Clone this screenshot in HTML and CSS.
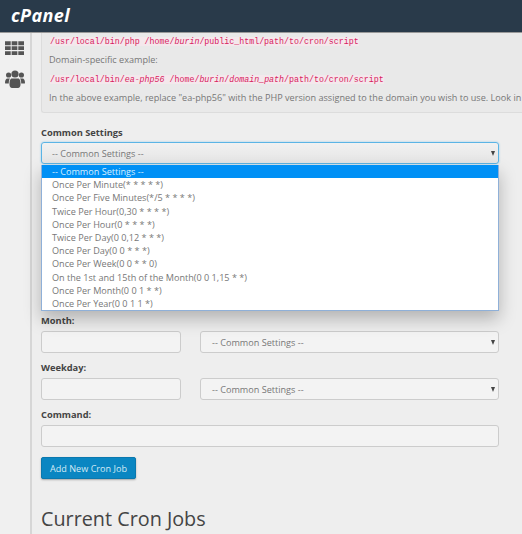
FILE: index.html
```html
<!DOCTYPE html>
<html lang="en">
<head>
    <meta charset="UTF-8">
    <meta name="viewport" content="width=device-width, initial-scale=1.0">
    <title>Cron Jobs - cPanel</title>
    <link rel="stylesheet" href="styles.css">
</head>
<body>
    <header class="topbar">
        <span class="logo">cPanel</span>
    </header>
    <div class="layout">
        <nav class="sidebar">
            <svg class="nav-icon" width="19" height="16" viewBox="0 0 20 16">
                <path fill="#555" d="M0 1h6v4H0zM7 1h6v4H7zM14 1h6v4h-6zM0 6.2h6v4H0zM7 6.2h6v4H7zM14 6.2h6v4h-6zM0 11.4h6v4H0zM7 11.4h6v4H7zM14 11.4h6v4h-6z"/>
            </svg>
            <svg class="nav-icon" width="20" height="19" viewBox="0 0 20 19">
                <g fill="#555">
                    <circle cx="3.6" cy="5" r="2.6"/>
                    <circle cx="16.4" cy="5" r="2.6"/>
                    <circle cx="10" cy="4" r="3.6"/>
                    <path d="M0 13c0-3 1-4.500 2.500-4.500h2.500c-.8 1-1.200 2.500-1.200 5H1c-.6 0-1-.1-1-.5zM20 13c0-3-1-4.500-2.500-4.500H15c.8 1 1.200 2.500 1.200 5H19c.6 0 1-.1 1-.5z"/>
                    <path d="M7 8.500h6c2 0 2.500 2.500 2.500 6 0 2-1 3.500-2.500 3.500H7c-1.500 0-2.500-1.500-2.500-3.500 0-3.500.5-6 2.500-6z"/>
                </g>
            </svg>
        </nav>
        <main class="content">
            <div class="well">
                <p class="code-line"><code>/usr/local/bin/php /home/<i>burin</i>/public_html/path/to/cron/script</code></p>
                <p class="note">Domain-specific example:</p>
                <p class="code-line"><code>/usr/local/bin/<i>ea-php56</i> /home/<i>burin</i>/<i>domain_path</i>/path/to/cron/script</code></p>
                <p class="note">In the above example, replace "ea-php56" with the PHP version assigned to the domain you wish to use. Look in</p>
            </div>

            <form class="cron-form">
                <div class="group common">
                    <label class="field-label">Common Settings</label>
                    <div class="select select-open"><span>-- Common Settings --</span></div>
                    <ul class="dropdown">
                        <li class="active">-- Common Settings --</li>
                        <li>Once Per Minute(* * * * *)</li>
                        <li>Once Per Five Minutes(*/5 * * * *)</li>
                        <li>Twice Per Hour(0,30 * * * *)</li>
                        <li>Once Per Hour(0 * * * *)</li>
                        <li>Twice Per Day(0 0,12 * * *)</li>
                        <li>Once Per Day(0 0 * * *)</li>
                        <li>Once Per Week(0 0 * * 0)</li>
                        <li>On the 1st and 15th of the Month(0 0 1,15 * *)</li>
                        <li>Once Per Month(0 0 1 * *)</li>
                        <li>Once Per Year(0 0 1 1 *)</li>
                    </ul>
                </div>

                <div class="group month">
                    <label class="field-label">Month:</label>
                    <div class="field-row">
                        <input class="text-input" type="text">
                        <div class="select"><span>-- Common Settings --</span></div>
                    </div>
                </div>

                <div class="group month">
                    <label class="field-label">Weekday:</label>
                    <div class="field-row">
                        <input class="text-input" type="text">
                        <div class="select"><span>-- Common Settings --</span></div>
                    </div>
                </div>

                <div class="group">
                    <label class="field-label">Command:</label>
                    <input class="text-input wide" type="text">
                </div>

                <button class="button" type="button">Add New Cron Job</button>
            </form>

            <h2 class="section-title">Current Cron Jobs</h2>
        </main>
    </div>
</body>
</html>
```

FILE: styles.css
```css
html, body {
    height: 100%;
}
body {
    margin: 0;
    font-family: "Open Sans", sans-serif;
    font-size: 9.1px;
    color: #777;
    background: #eee;
    overflow: hidden;
}
.topbar {
    height: 33px;
    box-sizing: border-box;
    padding: 3px 0 0 11px;
    background: #293a4a;
    border-bottom: 1px solid #999;
}
.logo {
    font-size: 18px;
    line-height: 24px;
    font-weight: 700;
    font-style: italic;
    letter-spacing: 0.4px;
    color: #fff;
}
.layout {
    display: flex;
    height: calc(100% - 33px);
}
.sidebar {
    width: 32px;
    box-sizing: border-box;
    padding: 7px 0 0 5px;
    display: flex;
    flex-direction: column;
    gap: 14px;
    background: #f0f0f0;
    border-right: 2px solid #d6d6d6;
}
.nav-icon {
    display: block;
}
.content {
    flex: 1;
    min-width: 0;
    padding-left: 9px;
}
.well {
    height: 80px;
    box-sizing: border-box;
    padding-top: 1px;
    padding-left: 7px;
    background: #e9e9e9;
    border: 1px solid #dcdcdc;
    border-top: none;
    border-right: none;
    border-radius: 0 0 0 3px;
    white-space: nowrap;
    overflow: hidden;
}
.well p {
    margin: 0;
}
.code-line {
    line-height: 13px;
    height: 13px;
    margin-top: 2px;
    padding-left: 1px;
}
.code-line code {
    font-family: "Liberation Mono", monospace;
    font-size: 8.3px;
    color: #d81b60;
    background: #f4e8ec;
}
.note {
    line-height: 13px;
}
.well .note {
    margin: 6px 0;
}
.cron-form {
    width: 458px;
    margin-top: 13px;
}
.group {
    margin-bottom: 10px;
}
.common {
    position: relative;
    margin-bottom: 150px;
}
.month {
    margin-bottom: 8px;
}
.field-label {
    display: block;
    height: 14px;
    margin-bottom: 3px;
    font-size: 9.3px;
    font-weight: 700;
    line-height: 14px;
    color: #444;
}
.common .field-label {
    margin-bottom: 2px;
}
.field-row {
    display: flex;
    gap: 19px;
}
.text-input {
    display: block;
    width: 140px;
    height: 22px;
    padding: 0;
    box-sizing: border-box;
    background: #f3f3f3;
    border: 1px solid #ccc;
    border-radius: 3px;
}
.text-input.wide {
    width: 100%;
}
.select {
    position: relative;
    flex: 1;
    height: 22px;
    box-sizing: border-box;
    padding-left: 11px;
    line-height: 21px;
    background: #f3f3f3;
    border: 1px solid #ccc;
    border-radius: 3px;
}
.select::after {
    content: "";
    position: absolute;
    right: 3px;
    top: 8px;
    border-top: 5px solid #444;
    border-left: 2.5px solid transparent;
    border-right: 2.5px solid transparent;
}
.select-open {
    padding-left: 10px;
    border-color: #5bb4e5;
    background: linear-gradient(#f1f1f1, #e6e6e6);
    box-shadow: 0 0 2px #8cc8ea;
}
.dropdown {
    position: absolute;
    left: 0;
    right: 0;
    top: 39px;
    margin: 0;
    padding: 0;
    list-style: none;
    background: #fff;
    border: 1px solid #8fb0d8;
    border-top: none;
    box-shadow: 0 8px 16px rgba(0, 0, 0, 0.25);
    z-index: 2;
}
.dropdown li {
    height: 13.2px;
    line-height: 13.2px;
    padding-left: 10px;
}
.dropdown .active {
    color: #d9efff;
    background: #0090f5;
}
.button {
    display: block;
    width: 95px;
    height: 22px;
    padding: 0;
    font-family: inherit;
    font-size: 9.1px;
    color: #d4eaf5;
    background: #0a86c2;
    border: 1px solid #0a78ae;
    border-radius: 2px;
    box-shadow: 0 1px 2px rgba(0, 0, 0, 0.3);
}
.section-title {
    margin: 26px 0 0;
    font-size: 19.8px;
    line-height: 27px;
    font-weight: 400;
    color: #444;
}
```
